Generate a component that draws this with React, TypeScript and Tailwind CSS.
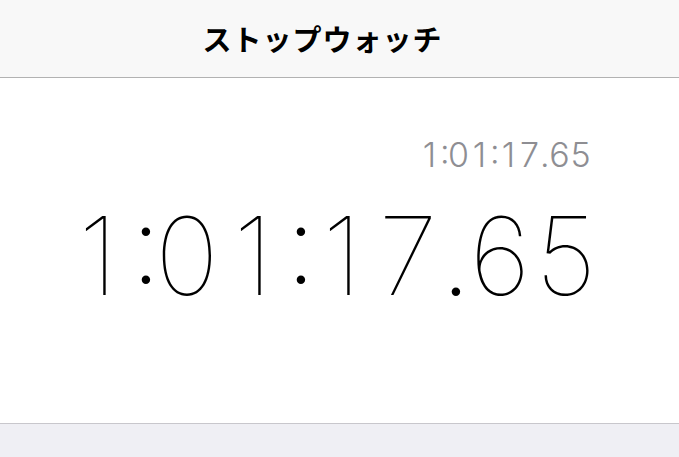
type Size = "big" | "small";

const cellClass: Record<Size, { digit: string; colon: string; dot: string }> = {
  big: {
    digit: "inline-block w-[66px] text-center",
    colon:
      "inline-block w-[23px] pr-[10px] text-center tracking-[-10px] font-extralight [font-feature-settings:'case']",
    dot: "inline-block w-[26px] text-center font-extralight",
  },
  small: {
    digit: "inline-block w-[21px] text-center",
    colon: "inline-block w-[8px] pr-[3px] text-center tracking-[-3px] [font-feature-settings:'case']",
    dot: "inline-block w-[9px] text-center",
  },
};

function Time({ value, size }: { value: string; size: Size }) {
  const c = cellClass[size];
  return (
    <>
      {value.split("").map((ch, i) => (
        <span key={i} className={ch === ":" ? c.colon : ch === "." ? c.dot : c.digit}>
          {ch}
        </span>
      ))}
    </>
  );
}

export default function App() {
  return (
    <div className="flex h-[457px] w-[679px] flex-col overflow-hidden bg-white">
      {/* header */}
      <div className="flex h-[78px] shrink-0 items-center justify-center border-b border-[#b2b2b2] bg-[#f8f8f8] pr-[34px]">
        <h1
          className="text-[29px] font-bold tracking-[1px] text-black"
          style={{ fontFamily: '"Noto Sans CJK JP", "Noto Sans", sans-serif' }}
        >
          ストップウォッチ
        </h1>
      </div>
      {/* times */}
      <div
        className="flex flex-1 flex-col items-end pt-[60px]"
        style={{ fontFamily: 'Inter, "Noto Sans", sans-serif' }}
      >
        <p className="mr-[88px] whitespace-nowrap text-[34px] font-light leading-none text-[#8e8e93]">
          <Time value="1:01:17.65" size="small" />
        </p>
        <p className="mr-[80px] mt-[30px] whitespace-nowrap text-[108px] font-thin leading-none text-black">
          <Time value="1:01:17.65" size="big" />
        </p>
      </div>
      {/* bottom panel */}
      <div className="h-[34px] shrink-0 border-t border-[#c8c7cc] bg-[#efeff4]" />
    </div>
  );
}
